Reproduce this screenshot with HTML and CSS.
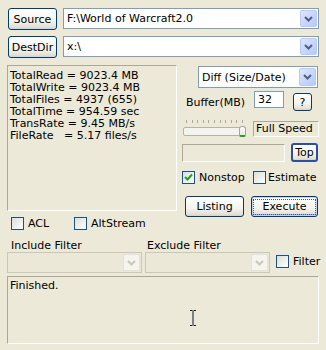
FILE: index.html
```html
<!DOCTYPE html>
<html lang="en">
<head>
    <meta charset="UTF-8">
    <title>FastCopy</title>
    <link rel="stylesheet" href="styles.css">
</head>
<body>
    <div class="app">
        <div class="path-row">
            <button class="btn path-btn">Source</button>
            <div class="combo path-combo">
                <span class="combo-text">F:\World of Warcraft2.0</span>
                <span class="combo-arrow"><svg width="9" height="6" viewBox="0 0 9 6"><polyline points="1,1 4.5,4.5 8,1" fill="none" stroke="#4d6185" stroke-width="2"/></svg></span>
            </div>
        </div>
        <div class="path-row">
            <button class="btn path-btn">DestDir</button>
            <div class="combo path-combo">
                <span class="combo-text">x:\</span>
                <span class="combo-arrow"><svg width="9" height="6" viewBox="0 0 9 6"><polyline points="1,1 4.5,4.5 8,1" fill="none" stroke="#4d6185" stroke-width="2"/></svg></span>
            </div>
        </div>

        <div class="main">
            <div class="stats sunken">
                <div>TotalRead = 9023.4 MB</div>
                <div>TotalWrite = 9023.4 MB</div>
                <div>TotalFiles = 4937 (655)</div>
                <div>TotalTime = 954.59 sec</div>
                <div>TransRate = 9.45 MB/s</div>
                <div>FileRate&nbsp;&nbsp;&nbsp;= 5.17 files/s</div>
            </div>

            <div class="side">
                <div class="combo mode-combo">
                    <span class="combo-text">Diff (Size/Date)</span>
                    <span class="combo-arrow"><svg width="9" height="6" viewBox="0 0 9 6"><polyline points="1,1 4.5,4.5 8,1" fill="none" stroke="#4d6185" stroke-width="2"/></svg></span>
                </div>

                <div class="buffer-row">
                    <span class="buffer-label">Buffer(MB)</span>
                    <span class="edit buffer-edit">32</span>
                    <button class="btn help-btn">?</button>
                </div>

                <div class="speed-row">
                    <div class="slider">
                        <div class="ticks">
                            <i></i><i></i><i></i><i></i><i></i><i></i><i></i><i></i><i></i><i></i><i></i>
                        </div>
                        <div class="track"></div>
                        <div class="thumb"></div>
                    </div>
                    <div class="speed-box sunken">Full Speed</div>
                </div>

                <div class="progress-row">
                    <div class="progress sunken"></div>
                    <button class="btn top-btn">Top</button>
                </div>

                <div class="check-row">
                    <label class="check nonstop">
                        <span class="box"><svg width="11" height="11" viewBox="0 0 11 11"><polyline points="2,5 4.5,7.5 9,2.5" fill="none" stroke="#21a121" stroke-width="2"/></svg></span>Nonstop
                    </label>
                    <label class="check estimate"><span class="box"></span>Estimate</label>
                </div>

                <div class="action-row">
                    <button class="btn listing-btn">Listing</button>
                    <button class="btn exec-btn"><span>Execute</span></button>
                </div>
            </div>
        </div>

        <div class="opts-row">
            <label class="check acl"><span class="box"></span>ACL</label>
            <label class="check altstream"><span class="box"></span>AltStream</label>
        </div>

        <div class="filter-labels">
            <span class="include-label">Include Filter</span>
            <span class="exclude-label">Exclude Filter</span>
        </div>

        <div class="filter-row">
            <div class="combo disabled include-combo">
                <span class="combo-text"></span>
                <span class="combo-arrow"><svg width="9" height="6" viewBox="0 0 9 6"><polyline points="1,1 4.5,4.5 8,1" fill="none" stroke="#c9c7ba" stroke-width="2"/></svg></span>
            </div>
            <div class="combo disabled exclude-combo">
                <span class="combo-text"></span>
                <span class="combo-arrow"><svg width="9" height="6" viewBox="0 0 9 6"><polyline points="1,1 4.5,4.5 8,1" fill="none" stroke="#c9c7ba" stroke-width="2"/></svg></span>
            </div>
            <label class="check filter-check"><span class="box"></span>Filter</label>
        </div>

        <div class="log sunken">
            Finished.
            <svg class="ibeam" width="8" height="16" viewBox="0 0 8 16">
                <path d="M1 0.5H3.5M4.5 0.5H7M4 1V15M1 15.5H3.5M4.5 15.5H7" stroke="#14142a" stroke-width="1" fill="none"/>
            </svg>
        </div>
    </div>
</body>
</html>
```

FILE: styles.css
```css
body {
    margin: 0;
    width: 326px;
    height: 350px;
    overflow: hidden;
    background: #ece9d8;
    font-family: "DejaVu Sans", Tahoma, sans-serif;
    font-size: 11px;
    color: #000;
}

.app {
    display: flex;
    flex-direction: column;
    padding: 8px 0 0 7px;
}

/* buttons, xp style */
.btn {
    box-sizing: border-box;
    padding: 0;
    font-family: inherit;
    font-size: 11px;
    color: #000;
    border: 1px solid #003c74;
    border-radius: 3px;
    background: linear-gradient(#ffffff, #f4f3ee 60%, #e3e0d5 90%, #d6d0c5);
}

.sunken {
    box-sizing: border-box;
    border-top: 1px solid #aca899;
    border-left: 1px solid #aca899;
    border-right: 1px solid #fff;
    border-bottom: 1px solid #fff;
}

/* combo boxes */
.combo {
    box-sizing: border-box;
    display: flex;
    align-items: stretch;
    border: 1px solid #7f9db9;
    background: #fff;
}

.combo-text {
    flex: 1;
    padding-left: 3px;
    display: flex;
    align-items: center;
    white-space: nowrap;
    overflow: hidden;
}

.combo-arrow {
    width: 15px;
    margin: 1px;
    border: 1px solid #bacaf4;
    border-radius: 2px;
    background: linear-gradient(135deg, #dbe6fd, #b6c9f7);
    display: flex;
    align-items: center;
    justify-content: center;
}

.combo.disabled {
    border-color: #c9c7ba;
    background: #ebe8d8;
}

.combo.disabled .combo-arrow {
    border-color: #e4e2d8;
    background: #f5f4ef;
}

.path-row {
    display: flex;
    gap: 6px;
    margin-left: 1px;
    margin-bottom: 6px;
    height: 22px;
}

.path-btn {
    width: 49px;
    height: 22px;
}

.path-combo {
    width: 256px;
    height: 21px;
}

/* main area */
.main {
    display: flex;
    gap: 5px;
    margin-top: 1px;
    height: 152px;
}

.stats {
    width: 170px;
    height: 146px;
    padding: 4px 0 0 2px;
    line-height: 12px;
    white-space: nowrap;
}

.side {
    width: 137px;
    display: flex;
    flex-direction: column;
}

.mode-combo {
    margin: 1px 0 0 16px;
    width: 120px;
    height: 22px;
}

.buffer-row {
    display: flex;
    align-items: flex-start;
    margin-top: 3px;
    height: 20px;
}

.buffer-label {
    width: 68px;
    margin-left: 4px;
    margin-top: 5px;
}

.edit {
    box-sizing: border-box;
    border: 1px solid #7f9db9;
    background: #fff;
}

.buffer-edit {
    width: 30px;
    height: 17px;
    padding: 1px 0 0 3px;
    margin-right: 9px;
}

.help-btn {
    width: 19px;
    height: 18px;
    margin-top: 2px;
}

.speed-row {
    display: flex;
    align-items: flex-start;
    margin-top: 9px;
    height: 17px;
}

.slider {
    position: relative;
    width: 63px;
    height: 17px;
    margin-left: 1px;
}

.ticks {
    display: flex;
    justify-content: space-between;
    width: 57px;
    margin-left: 3px;
    height: 3px;
}

.ticks i {
    width: 1px;
    height: 3px;
    background: #aca899;
}

.track {
    box-sizing: border-box;
    margin-top: 4px;
    width: 62px;
    height: 9px;
    border: 1px solid #b4b2a4;
    border-radius: 2px;
    background: #f3f3ef;
}

.thumb {
    position: absolute;
    left: 56px;
    top: 6px;
    box-sizing: border-box;
    width: 7px;
    height: 11px;
    border: 1px solid #a6a597;
    border-bottom: 2px solid #21a121;
    border-radius: 3px 3px 2px 2px;
    background: linear-gradient(#ffffff, #e8e8e1);
}

.speed-box {
    width: 66px;
    height: 16px;
    margin: 1px 0 0 7px;
    padding-left: 2px;
    line-height: 14px;
    white-space: nowrap;
}

.progress-row {
    display: flex;
    align-items: flex-start;
    margin-top: 6px;
    height: 19px;
}

.progress {
    width: 103px;
    height: 18px;
    margin-top: 1px;
}

.top-btn {
    width: 27px;
    height: 19px;
    margin-left: 6px;
    border-width: 2px;
    border-color: #2c4f9e;
}

/* checkboxes */
.check {
    display: flex;
    align-items: center;
    height: 13px;
    white-space: nowrap;
}

.box {
    box-sizing: border-box;
    width: 13px;
    height: 13px;
    margin-right: 4px;
    border: 1px solid #1c5180;
    background: linear-gradient(135deg, #dcdcd7, #ffffff);
    display: flex;
    align-items: center;
    justify-content: center;
}

.check-row {
    display: flex;
    margin-top: 9px;
    height: 13px;
}

.nonstop {
    width: 71px;
}

.estimate .box {
    margin-right: 2px;
}

.action-row {
    display: flex;
    margin-top: 12px;
    height: 21px;
}

.listing-btn {
    width: 59px;
    height: 21px;
    margin-left: 3px;
}

.exec-btn {
    width: 67px;
    height: 21px;
    margin-left: 7px;
    box-shadow: inset 0 0 0 1px #c2d3f4, inset 0 -1px 0 1px #9ab6ec;
}

.exec-btn span {
    display: block;
    margin: 0 2px;
    outline: 1px dotted #555;
    line-height: 14px;
}

.opts-row {
    display: flex;
    margin-left: 4px;
    height: 13px;
}

.acl {
    width: 63px;
}

.filter-labels {
    display: flex;
    margin: 9px 0 0 4px;
    height: 13px;
    line-height: 13px;
}

.include-label {
    width: 136px;
}

.filter-row {
    display: flex;
    align-items: flex-start;
    margin-top: 0;
    height: 21px;
}

.include-combo {
    width: 135px;
    height: 21px;
}

.exclude-combo {
    width: 125px;
    height: 21px;
    margin-left: 3px;
}

.filter-check {
    margin: 3px 0 0 6px;
}

.log {
    position: relative;
    width: 312px;
    height: 68px;
    margin-top: 3px;
    padding: 2px 0 0 2px;
}

.ibeam {
    position: absolute;
    left: 181px;
    top: 33px;
}
```
